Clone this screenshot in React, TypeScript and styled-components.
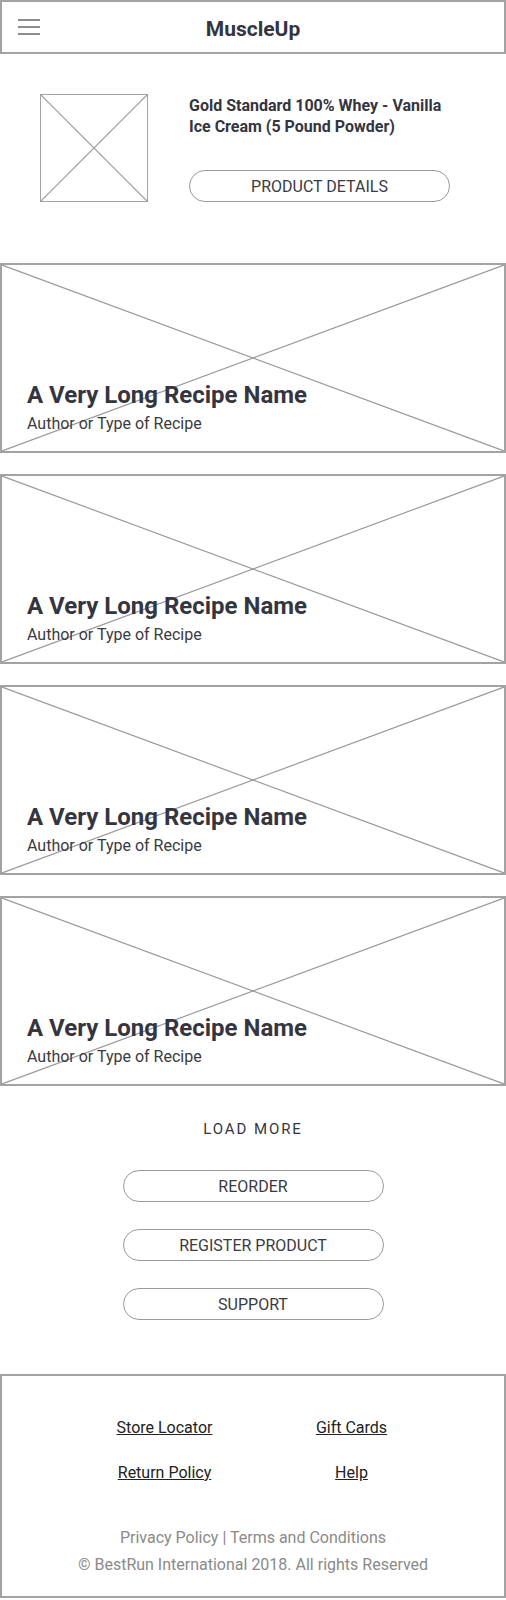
import React from "react";
import styled, { createGlobalStyle } from "styled-components";

const Global = createGlobalStyle`
  html, body { margin: 0; padding: 0; background: #fff; }
  body { font-family: Roboto, "Noto Sans", Arial, sans-serif; color: #34353f; }
  * { box-sizing: border-box; }
`;

const Page = styled.div`
  width: 506px;
  display: flex;
  flex-direction: column;
`;

const Header = styled.header`
  height: 54px;
  border: 2px solid #a3a3a3;
  display: flex;
  align-items: center;
  position: relative;
  justify-content: center;
  padding-top: 4px;
`;

const Burger = styled.div`
  position: absolute;
  left: 16px;
  top: 17px;
  width: 22px;
  display: flex;
  flex-direction: column;
  gap: 5px;
  span {
    display: block;
    height: 2px;
    background: #8d8d8d;
  }
`;

const Brand = styled.h1`
  margin: 0;
  font-size: 21px;
  font-weight: 700;
  color: #34353f;
  line-height: 24px;
`;

const Product = styled.section`
  display: flex;
  gap: 41px;
  padding: 40px 0 0 40px;
`;

const PlaceholderBox = styled.div<{ $w: string; $h: string }>`
  position: relative;
  width: ${(p) => p.$w};
  height: ${(p) => p.$h};
  border: 1.5px solid #a3a3a3;
  flex-shrink: 0;
`;

const Cross = styled.svg`
  position: absolute;
  inset: 0;
  width: 100%;
  height: 100%;
  pointer-events: none;
`;

const ProductInfo = styled.div`
  width: 261px;
  display: flex;
  flex-direction: column;
  justify-content: space-between;
  padding-top: 1px;
`;

const ProductTitle = styled.div`
  font-size: 16px;
  font-weight: 700;
  line-height: 21px;
  color: #34353f;
  white-space: nowrap;
`;

const PillButton = styled.button<{ $w?: string }>`
  width: ${(p) => p.$w || "261px"};
  height: 32px;
  border: 1.5px solid #9a9a9a;
  border-radius: 16px;
  background: #fff;
  font-family: Roboto, Arial, sans-serif;
  font-size: 16px;
  color: #3a3a42;
  padding: 0;
`;

const Cards = styled.div`
  margin-top: 61px;
  display: flex;
  flex-direction: column;
  gap: 21px;
`;

const Card = styled.article`
  position: relative;
  height: 190px;
  border: 2px solid #a3a3a3;
  display: flex;
  flex-direction: column;
  justify-content: flex-end;
  padding: 0 0 17px 25px;
`;

const CardTitle = styled.div`
  position: relative;
  font-size: 24px;
  font-weight: 700;
  line-height: 28px;
  color: #34353f;
`;

const CardSub = styled.div`
  position: relative;
  margin-top: 5px;
  font-size: 16px;
  line-height: 20px;
  color: #3a3a42;
`;

const Actions = styled.div`
  display: flex;
  flex-direction: column;
  align-items: center;
  padding-top: 33px;
`;

const LoadMore = styled.div`
  font-size: 15px;
  letter-spacing: 1.9px;
  line-height: 20px;
  color: #34353f;
  margin-bottom: 31px;
`;

const ButtonStack = styled.div`
  display: flex;
  flex-direction: column;
  gap: 27px;
  align-items: center;
`;

const Footer = styled.footer`
  margin-top: 54px;
  height: 224px;
  border: 2px solid #a3a3a3;
  display: flex;
  flex-direction: column;
  align-items: center;
  padding-top: 40px;
`;

const LinkGrid = styled.div`
  display: grid;
  grid-template-columns: 187px 187px;
  row-gap: 21px;
  margin-left: 10px;
  justify-items: center;
`;

const FooterLink = styled.a`
  font-size: 16px;
  line-height: 24px;
  color: #222;
  text-decoration: underline;
`;

const Legal = styled.div`
  margin-top: 39px;
  text-align: center;
  font-size: 16px;
  line-height: 27px;
  color: #8a8a8a;
`;

const XLines = () => (
  <Cross viewBox="0 0 100 100" preserveAspectRatio="none">
    <line x1="0" y1="0" x2="100" y2="100" stroke="#9a9a9a" strokeWidth="1.2" vectorEffect="non-scaling-stroke" />
    <line x1="100" y1="0" x2="0" y2="100" stroke="#9a9a9a" strokeWidth="1.2" vectorEffect="non-scaling-stroke" />
  </Cross>
);

const recipes = [1, 2, 3, 4];

export default function App() {
  return (
    <Page>
      <Global />
      <Header>
        <Burger>
          <span />
          <span />
          <span />
        </Burger>
        <Brand>MuscleUp</Brand>
      </Header>
      <Product>
        <PlaceholderBox $w="108px" $h="108px">
          <XLines />
        </PlaceholderBox>
        <ProductInfo>
          <ProductTitle>
            Gold Standard 100% Whey - Vanilla
            <br />
            Ice Cream (5 Pound Powder)
          </ProductTitle>
          <PillButton>PRODUCT DETAILS</PillButton>
        </ProductInfo>
      </Product>
      <Cards>
        {recipes.map((r) => (
          <Card key={r}>
            <XLines />
            <CardTitle>A Very Long Recipe Name</CardTitle>
            <CardSub>Author or Type of Recipe</CardSub>
          </Card>
        ))}
      </Cards>
      <Actions>
        <LoadMore>LOAD MORE</LoadMore>
        <ButtonStack>
          <PillButton>REORDER</PillButton>
          <PillButton>REGISTER PRODUCT</PillButton>
          <PillButton>SUPPORT</PillButton>
        </ButtonStack>
      </Actions>
      <Footer>
        <LinkGrid>
          <FooterLink>Store Locator</FooterLink>
          <FooterLink>Gift Cards</FooterLink>
          <FooterLink>Return Policy</FooterLink>
          <FooterLink>Help</FooterLink>
        </LinkGrid>
        <Legal>
          Privacy Policy | Terms and Conditions
          <br />© BestRun International 2018. All rights Reserved
        </Legal>
      </Footer>
    </Page>
  );
}
